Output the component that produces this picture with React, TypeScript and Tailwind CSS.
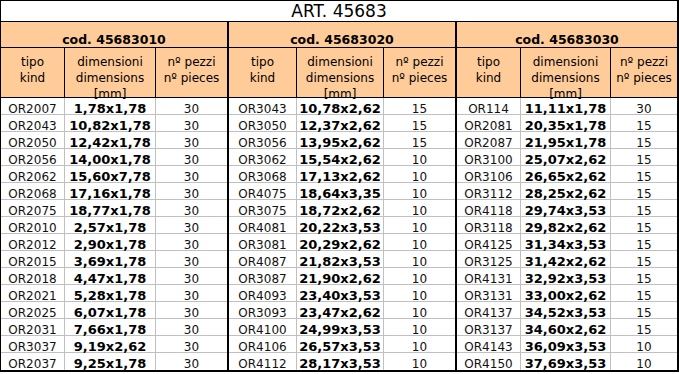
import React from "react";

const groups = [
  {
    code: "cod. 45683010",
    widths: ["w-[64px]", "w-[91px]", "w-[71px]"],
    rows: [
      ["OR2007", "1,78x1,78", "30"],
      ["OR2043", "10,82x1,78", "30"],
      ["OR2050", "12,42x1,78", "30"],
      ["OR2056", "14,00x1,78", "30"],
      ["OR2062", "15,60x7,78", "30"],
      ["OR2068", "17,16x1,78", "30"],
      ["OR2075", "18,77x1,78", "30"],
      ["OR2010", "2,57x1,78", "30"],
      ["OR2012", "2,90x1,78", "30"],
      ["OR2015", "3,69x1,78", "30"],
      ["OR2018", "4,47x1,78", "30"],
      ["OR2021", "5,28x1,78", "30"],
      ["OR2025", "6,07x1,78", "30"],
      ["OR2031", "7,66x1,78", "30"],
      ["OR3037", "9,19x2,62", "30"],
      ["OR2037", "9,25x1,78", "30"],
    ],
  },
  {
    code: "cod. 45683020",
    widths: ["w-[68px]", "w-[87px]", "w-[71px]"],
    rows: [
      ["OR3043", "10,78x2,62", "15"],
      ["OR3050", "12,37x2,62", "15"],
      ["OR3056", "13,95x2,62", "15"],
      ["OR3062", "15,54x2,62", "10"],
      ["OR3068", "17,13x2,62", "10"],
      ["OR4075", "18,64x3,35", "10"],
      ["OR3075", "18,72x2,62", "10"],
      ["OR4081", "20,22x3,53", "10"],
      ["OR3081", "20,29x2,62", "10"],
      ["OR4087", "21,82x3,53", "10"],
      ["OR3087", "21,90x2,62", "10"],
      ["OR4093", "23,40x3,53", "10"],
      ["OR3093", "23,47x2,62", "10"],
      ["OR4100", "24,99x3,53", "10"],
      ["OR4106", "26,57x3,53", "10"],
      ["OR4112", "28,17x3,53", "10"],
    ],
  },
  {
    code: "cod. 45683030",
    widths: ["w-[64px]", "w-[90px]", "w-[66px]"],
    rows: [
      ["OR114", "11,11x1,78", "30"],
      ["OR2081", "20,35x1,78", "15"],
      ["OR2087", "21,95x1,78", "15"],
      ["OR3100", "25,07x2,62", "15"],
      ["OR3106", "26,65x2,62", "15"],
      ["OR3112", "28,25x2,62", "15"],
      ["OR4118", "29,74x3,53", "15"],
      ["OR3118", "29,82x2,62", "15"],
      ["OR4125", "31,34x3,53", "15"],
      ["OR3125", "31,42x2,62", "15"],
      ["OR4131", "32,92x3,53", "15"],
      ["OR3131", "33,00x2,62", "15"],
      ["OR4137", "34,52x3,53", "15"],
      ["OR3137", "34,60x2,62", "15"],
      ["OR4143", "36,09x3,53", "10"],
      ["OR4150", "37,69x3,53", "10"],
    ],
  },
];

const font = { fontFamily: '"DejaVu Sans", Verdana, sans-serif' };

function Group({ g, last }: { g: (typeof groups)[number]; last: boolean }) {
  return (
    <div className={`flex flex-col ${last ? "" : "border-r-2 border-black"}`}>
      <div className="h-[26px] bg-[#ffcc99] border-b border-black flex items-end justify-center text-[12.5px] font-bold leading-[14px] text-black">
        {g.code}
      </div>
      <div className="h-[50px] bg-[#ffcc99] border-b border-black flex text-[12px] leading-[16px] text-black">
        <div className={`${g.widths[0]} border-r border-black text-center pt-[6px]`}>
          tipo
          <br />
          kind
        </div>
        <div className={`${g.widths[1]} border-r border-black text-center pt-[6px]`}>
          dimensioni
          <br />
          dimensions
          <br />
          [mm]
        </div>
        <div className={`${g.widths[2]} text-center pt-[6px]`}>
          nº pezzi
          <br />
          nº pieces
        </div>
      </div>
      {g.rows.map((r, i) => (
        <div
          key={i}
          className={`h-[17px] flex ${i === g.rows.length - 1 ? "" : "border-b border-[#c0c0c0]"}`}
        >
          <div className={`${g.widths[0]} border-r border-[#c0c0c0] text-center text-[12px] leading-[22px] text-[#111]`}>
            {r[0]}
          </div>
          <div className={`${g.widths[1]} border-r border-[#c0c0c0] text-center text-[13px] font-bold leading-[22px] text-black`}>
            {r[1]}
          </div>
          <div className={`${g.widths[2]} text-center text-[12px] leading-[22px] text-[#111]`}>{r[2]}</div>
        </div>
      ))}
    </div>
  );
}

export default function App() {
  return (
    <div className="w-[679px] h-[374px] bg-white" style={font}>
      <div className="w-[679px] border-l border-t border-r-2 border-b-2 border-black flex flex-col">
        <div className="h-[21px] border-b border-black flex items-center justify-center text-[17px] leading-[20px] text-black">
          ART. 45683
        </div>
        <div className="flex">
          {groups.map((g, i) => (
            <Group key={i} g={g} last={i === groups.length - 1} />
          ))}
        </div>
      </div>
    </div>
  );
}
